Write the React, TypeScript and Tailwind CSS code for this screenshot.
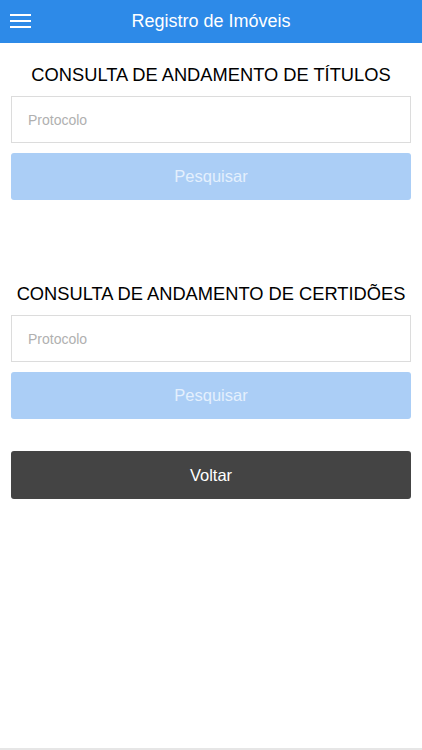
export default function App() {
  return (
    <div
      className="flex min-h-[750px] w-full flex-col bg-white"
      style={{ fontFamily: '"Liberation Sans", Arial, sans-serif' }}
    >
      <header className="relative flex h-[43px] items-center justify-center bg-[#2d8ae8]">
        <button className="absolute left-[10px] top-[14px] flex w-[21px] flex-col gap-[4px]">
          <span className="h-[2px] w-full bg-white" />
          <span className="h-[2px] w-full bg-white" />
          <span className="h-[2px] w-full bg-white" />
        </button>
        <h1 className="text-[18px] text-white">Registro de Imóveis</h1>
      </header>

      <main className="flex flex-1 flex-col px-[11px]">
        <section className="flex flex-col pt-[22px]">
          <h2 className="text-center text-[18.3px] leading-[20px] text-black">
            CONSULTA DE ANDAMENTO DE TÍTULOS
          </h2>
          <input
            className="mt-[11px] h-[47px] w-full border border-[#dcdcdc] px-[16px] text-[14px] outline-none placeholder:text-[#b0b0b0]"
            placeholder="Protocolo"
          />
          <button className="mt-[10px] h-[47px] w-full rounded-[3px] bg-[#abcef6] text-[16.5px] text-[#e4f0fd]">
            Pesquisar
          </button>
        </section>

        <section className="flex flex-col pt-[84px]">
          <h2 className="text-center text-[18.3px] leading-[20px] text-black">
            CONSULTA DE ANDAMENTO DE CERTIDÕES
          </h2>
          <input
            className="mt-[11px] h-[47px] w-full border border-[#dcdcdc] px-[16px] text-[14px] outline-none placeholder:text-[#b0b0b0]"
            placeholder="Protocolo"
          />
          <button className="mt-[10px] h-[47px] w-full rounded-[3px] bg-[#abcef6] text-[16.5px] text-[#e4f0fd]">
            Pesquisar
          </button>
        </section>

        <button className="mt-[32px] h-[48px] w-full rounded-[3px] bg-[#444444] text-[16.5px] text-white">
          Voltar
        </button>
      </main>

      <div className="h-[2px] w-full bg-[#e6e6e6]" />
    </div>
  )
}
